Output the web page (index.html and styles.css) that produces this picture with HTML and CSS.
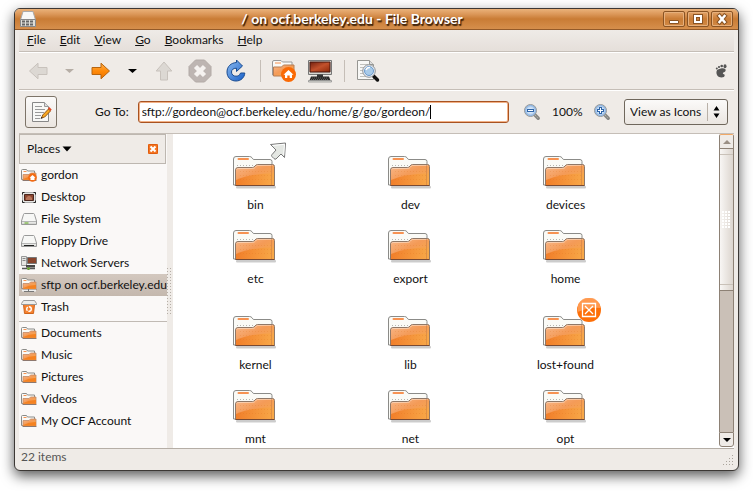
FILE: index.html
```html
<!DOCTYPE html>
<html lang="en">
<head>
<meta charset="utf-8">
<title>/ on ocf.berkeley.edu - File Browser</title>
<link rel="stylesheet" href="styles.css">
</head>
<body>
<svg class="sprite" aria-hidden="true">
  <defs>
    <linearGradient id="g-front" x1="0" y1="0" x2="1" y2="1"><stop offset="0" stop-color="#f8b98c"/><stop offset=".45" stop-color="#f49b58"/><stop offset="1" stop-color="#f9ad45"/></linearGradient>
    <linearGradient id="g-low" x1="0" y1="0" x2="1" y2="0"><stop offset="0" stop-color="#f17a22"/><stop offset="1" stop-color="#f8a848"/></linearGradient>
    <linearGradient id="g-orange" x1="0" y1="0" x2="0" y2="1"><stop offset="0" stop-color="#ffb050"/><stop offset=".5" stop-color="#ff8a08"/><stop offset="1" stop-color="#ee7200"/></linearGradient>
    <linearGradient id="g-blue" x1="0" y1="0" x2="1" y2="1"><stop offset="0" stop-color="#8dbbef"/><stop offset="1" stop-color="#175fc8"/></linearGradient>
    <linearGradient id="g-screen" x1="0" y1="0" x2="1" y2="1"><stop offset="0" stop-color="#72200f"/><stop offset=".5" stop-color="#c2512c"/><stop offset="1" stop-color="#8c2708"/></linearGradient>
    <radialGradient id="g-lens"><stop offset="0" stop-color="#f5faff"/><stop offset="1" stop-color="#9dc2ea"/></radialGradient>
  </defs>
  <symbol id="folder" viewBox="0 0 44 34">
    <rect x="3" y="31" width="40" height="2.500" rx="1" fill="#000" opacity=".2"/>
    <path d="M.5 30V4q0-2.500 2.500-2.500h13.500q1.500 0 2.500 1.200l1.400 1.800H37q2 0 2 2V30z" fill="#fafaf6" stroke="#8b8b88"/>
    <path d="M5.500 4h9.500" stroke="#f79252" stroke-width="2" stroke-linecap="round"/>
    <path d="M4 10.500h16" stroke="#b5b5b0" stroke-dasharray="1 2"/>
    <path d="M2.500 30.500V15q0-2.500 2.500-2.500h14.500q1.500 0 2.500-1.500t2.500-1.500h15q2 0 2 2v19z" fill="url(#g-front)" stroke="#8f7868"/>
    <path d="M3 25Q17 18.500 41 18.500V30H3z" fill="url(#g-low)" opacity=".85"/>
    <path d="M7 16.500h33M7 20.500h33M7 24.500h33" stroke="#db701c" stroke-dasharray="1 2" opacity=".22"/>
    <path d="M3.500 14.500q.5-1 2-1h14q2 0 3-1.500t2-1.500h15" fill="none" stroke="#fff" opacity=".4"/>
    <path d="M38.500 10v20" stroke="#b97041" opacity=".4"/>
    <path d="M2.500 30.500h39" stroke="#7a4a32"/>
  </symbol>
  <symbol id="mini" viewBox="0 0 16 14">
    <path d="M.5 11.500v-9q0-1 1-1h4l1 1.500h7v8z" fill="#fafaf7" stroke="#8b8b88"/>
    <path d="M2.500 3.500h3" stroke="#f79252"/>
    <path d="M2 12V6.500h6L9.500 5H15v7z" fill="url(#g-front)" stroke="#c28a68" stroke-width=".8"/>
    <path d="M2.400 11Q8 7.800 15 8v3.800H2.400z" fill="#f58221"/>
    <path d="M1.500 12.500h14" stroke="#77625a" stroke-width=".8"/>
  </symbol>
  <symbol id="drive" viewBox="0 0 16 14">
    <path d="M3.500 1.500h9q.8 0 1 1l2 6.500v3.500H.5V9l2-6.500q.2-1 1-1z" fill="#f7f7f6" stroke="#999"/>
    <path d="M1 9.500h14" stroke="#b5b5b5"/><path d="M1 10.500h14v1.500H1z" fill="#d8d8d6"/>
  </symbol>
  <symbol id="lens" viewBox="0 0 18 18">
    <path d="M12 12l3.200 3.200" stroke="#888884" stroke-width="3.500" stroke-linecap="round"/>
    <path d="M12 12l3.500 3.500" stroke="#cbcbc6" stroke-dasharray="1 1.500"/>
    <circle cx="7.500" cy="7.500" r="6" fill="url(#g-lens)" stroke="#999a98"/><circle cx="7.500" cy="7.500" r="4.900" fill="none" stroke="#8bb0de"/>
  </symbol>
  <symbol id="arrow" viewBox="0 0 24 24"><path d="M3 8.500h9V4.200l8.500 7.800-8.500 7.800v-4.300H3z" stroke-linejoin="round"/></symbol>
</svg>

<div class="window">
  <header class="titlebar">
    <svg class="title-icon" viewBox="0 0 16 16"><path d="M3 .5h10L15.500 9v6.500H.5V9z" fill="#f8f8f7" stroke="#aaa"/><path d="M.5 8.500h15v7H.5z" fill="#deded9" stroke="#888"/><path d="M2 10.500h12M2 13.500h12" stroke="#666" stroke-width="2" stroke-dasharray="3 1"/></svg>
    <h1>/ on ocf.berkeley.edu - File Browser</h1>
    <div class="controls">
      <button aria-label="Minimize"><svg viewBox="0 0 20 14"><path d="M5.500 8.500h9v3h-9z" fill="#fff" stroke="#8a5424"/></svg></button>
      <button aria-label="Maximize"><svg viewBox="0 0 20 14"><path d="M7 4h6v6H7z" fill="none" stroke="#8a5424" stroke-width="4"/><path d="M7 4h6v6H7z" fill="none" stroke="#fff" stroke-width="2"/></svg></button>
      <button aria-label="Close"><svg viewBox="0 0 20 14"><path d="M7.500 4l5 6M12.500 4l-5 6" stroke="#8a5424" stroke-width="4.500" stroke-linecap="square"/><path d="M7.500 4l5 6M12.500 4l-5 6" stroke="#fff" stroke-width="2.500" stroke-linecap="square"/></svg></button>
    </div>
  </header>

  <nav class="menubar">
    <button><u>F</u>ile</button><button><u>E</u>dit</button><button><u>V</u>iew</button><button><u>G</u>o</button><button><u>B</u>ookmarks</button><button><u>H</u>elp</button>
  </nav>

  <div class="toolbar">
    <button aria-label="Back"><svg viewBox="0 0 24 24" fill="#dcd8d3" stroke="#c8c2bc"><use href="#arrow" transform="translate(24 0) scale(-1 1)"/></svg></button>
    <button class="drop" aria-label="Back history"><svg viewBox="0 0 15 24"><path d="M3 10h9l-4.500 4z" fill="#b6aea6"/></svg></button>
    <button aria-label="Forward"><svg viewBox="0 0 24 24" fill="url(#g-orange)" stroke="#b7650f"><use href="#arrow"/></svg></button>
    <button class="drop" aria-label="Forward history"><svg viewBox="0 0 15 24"><path d="M3 10h9l-4.500 4z" fill="#000"/></svg></button>
    <button aria-label="Up"><svg viewBox="0 0 24 24"><path d="M8.500 21v-9H4.200L12 3l7.800 9h-4.300v9z" fill="#dcd8d3" stroke="#c8c2bc" stroke-linejoin="round"/></svg></button>
    <button aria-label="Stop"><svg viewBox="0 0 24 24"><path d="M7.500 1h9L23 7.500v9L16.500 23h-9L1 16.500v-9z" fill="#bdb5b2" stroke="#b2aaa6"/><path d="M7.500 7.500l9 9M16.500 7.500l-9 9" stroke="#f5f2f0" stroke-width="4.500"/></svg></button>
    <button aria-label="Reload"><svg viewBox="0 0 24 24"><path d="M12.500 3.500V1l6 6-6 5.500V9.200C9 9.200 7.500 11 7.500 13c0 2.600 2 4.200 4.500 4.200 2 0 3.700-1 4.600-3.200h4.200C20.500 18.500 17 22 12 22c-5.500 0-9-3.800-9-9 0-5.500 4-9.200 9.500-9.500z" fill="url(#g-blue)" stroke="#1a4c91"/></svg></button>
    <span class="rule"></span>
    <button aria-label="Home"><svg viewBox="0 0 24 24"><path d="M.5 16V3q0-1.500 1.500-1.500h7L10.500 3H20v13z" fill="#fafaf7" stroke="#999"/><path d="M3 4h6" stroke="#f79252"/><path d="M1.500 17V8h8L11.500 6H22v11z" fill="url(#g-front)" stroke="#b77e55"/><circle cx="16.500" cy="15.500" r="7.500" fill="#fa6a05"/><path d="M16.500 11l5 4.700H20V19h-2.300v-2.500h-2.400V19H13v-3.300h-1.500z" fill="#fff"/></svg></button>
    <button aria-label="Computer"><svg viewBox="0 0 24 24"><path d="M.5 1.500h23v14H.5z" fill="#d7d7d2" stroke="#777"/><path d="M2 3h20v10H2z" fill="url(#g-screen)" stroke="#46150c"/><path d="M9 15.500h6v3H9z" fill="#333"/><path d="M3 17.500h18l1.500 4h-21z" fill="#292929"/><path d="M4 19h16M3 20.500h18" stroke="#777" stroke-width=".7" stroke-dasharray="1 1"/><path d="M.5 21.500h23v1.500H.5z" fill="#deded8" stroke="#888" stroke-width=".7"/></svg></button>
    <span class="rule"></span>
    <button aria-label="Search"><svg viewBox="0 0 24 24"><path d="M1.500 1.500h12l4 4v15h-16z" fill="#f8f8f6" stroke="#969692"/><path d="M13.500 1.500v4h4" fill="#ddd" stroke="#969692"/><path d="M4 5.500h8M4 8.500h5M4 11.500h4M4 14.500h4M4 17.500h10" stroke="#c2c2be"/><path d="M17.500 17l4 4" stroke="#111" stroke-width="3.500" stroke-linecap="round"/><circle cx="13" cy="12" r="6.300" fill="#e9eef4" stroke="#8f9397"/><circle cx="13" cy="12" r="4.500" fill="#a9cbe9" stroke="#6b9acb"/><path d="M10 11q1-3 4-2.500" stroke="#fff" stroke-width="1.500" fill="none"/></svg></button>
    <svg class="foot" viewBox="0 0 12 14"><path d="M5.800 4.500c3-.8 5.500.3 4.800 2.300-.5 1.600-3 1.300-2.700 2.700.2 1 1.800.3 1.800 1.800 0 1.400-1.500 2.200-3.200 2.200C3 13.500 1 10.500 1.500 7.500c.3-1.700 2.300-2.600 4.300-3z" fill="#555"/><ellipse cx="10" cy="2.200" rx="1.500" ry="2" fill="#555"/><circle cx="6.700" cy="2" r="1.300" fill="#555"/><circle cx="4" cy="3" r="1.100" fill="#555"/><circle cx="1.800" cy="4.500" r="1" fill="#555"/></svg>
  </div>

  <div class="location">
    <button class="edit" aria-label="Edit location"><svg viewBox="0 0 22 22"><path d="M2.500 1.500h12l4 4v15h-16z" fill="#f8f8f6" stroke="#888"/><path d="M14.500 1.500v4h4" fill="#ddd" stroke="#999"/><path d="M5 5.500h7M5 8.500h10M5 11.500h9M5 14.500h6M5 17.500h5" stroke="#999"/><path d="M11.500 17l1.200-3L18.500 8l2 2-5.800 6z" fill="#f9a81f" stroke="#955817"/><path d="M18 7.500l2.500 2.500 1.200-1.400L19.200 6z" fill="#e34825"/><path d="M10.500 18l1-2 1.200 1z" fill="#111"/></svg></button>
    <label for="path">Go To:</label>
    <div class="entry"><input id="path" type="text" value="sftp://gordeon@ocf.berkeley.edu/home/g/go/gordeon/"><span class="caret"></span></div>
    <button class="zoom" aria-label="Zoom out"><svg viewBox="0 0 18 18"><use href="#lens"/><path d="M4 7.500h7" stroke="#2f65a8" stroke-width="3"/><path d="M5 7.500h5" stroke="#fff"/></svg></button>
    <span class="percent">100%</span>
    <button class="zoom" aria-label="Zoom in"><svg viewBox="0 0 18 18"><use href="#lens"/><path d="M4 7.500h7M7.500 4v7" stroke="#2f65a8" stroke-width="3"/><path d="M5 7.500h5M7.500 5v5" stroke="#fff"/></svg></button>
    <div class="combo"><select aria-label="View mode"><option>View as Icons</option><option>View as List</option></select><svg viewBox="0 0 20 24"><path d="M.5 3v18" stroke="#b9b1a8"/><path d="M6.500 10.500h6l-3-4.500zM6.500 13.500h6l-3 4.500z" fill="#000"/></svg></div>
  </div>

  <main class="panes">
    <aside class="sidebar">
      <div class="side-head">
        <button class="places">Places<svg viewBox="0 0 10 6"><path d="M.5.5h9L5 5.500z" fill="#000"/></svg></button>
        <button class="side-close" aria-label="Close side pane"><svg viewBox="0 0 10 10"><rect width="10" height="10" rx="1" fill="#f47421"/><rect x=".5" y=".5" width="9" height="9" rx="1" fill="none" stroke="#df5c0f"/><path d="M2.500 2.500l5 5M7.500 2.500l-5 5" stroke="#fff" stroke-width="2"/></svg></button>
      </div>
      <ul class="bookmarks">
        <li><a href="#"><svg viewBox="0 0 16 14"><use href="#mini"/><circle cx="11.500" cy="9.500" r="4.300" fill="#f26b14"/><path d="M11.500 7l3 2.800h-1V12h-4V9.800h-1z" fill="#fff"/></svg>gordon</a></li>
        <li><a href="#"><svg viewBox="0 0 16 14"><path d="M1.500 2.500h13v10h-13z" fill="#e6e6e4" stroke="#aaa"/><path d="M3.500 4.500h9v6h-9z" fill="#8c4630" stroke="#4b271e"/><path d="M5 8l2-2h2l2 2v2H5z" fill="#b8745a"/><path d="M1.500 4.500v-2h2M12.500 2.500h2v2M14.500 10.500v2h-2M3.500 12.500h-2v-2" fill="none" stroke="#222"/></svg>Desktop</a></li>
        <li><a href="#"><svg viewBox="0 0 16 14"><use href="#drive"/><path d="M3.500 11h4" stroke="#5aa817"/></svg>File System</a></li>
        <li><a href="#"><svg viewBox="0 0 16 14"><use href="#drive"/><path d="M3 11.500h10" stroke="#222"/></svg>Floppy Drive</a></li>
        <li><a href="#"><svg viewBox="0 0 16 14"><path d="M.5.500h5v9h-5z" fill="#e7e7e4" stroke="#999"/><path d="M1.500 2.500h3M1.500 4.500h3" stroke="#888"/><path d="M6.500 1.500h9v6h-9z" fill="#89442c" stroke="#777"/><path d="M5 9h9v2.500H5z" fill="#444"/><path d="M1 12.500h13M7.500 10v4" stroke="#555" stroke-width="1.500"/><path d="M6 12.500h3" stroke="#6eae34" stroke-width="2"/></svg>Network Servers</a></li>
        <li class="current"><a href="#"><svg viewBox="0 0 16 14"><use href="#mini" y="-1"/><path d="M1 12.500h14" stroke="#eee" stroke-width="2"/><path d="M3 13.500h10M7.500 11v3" stroke="#777"/></svg>sftp on ocf.berkeley.edu</a></li>
        <li><a href="#"><svg viewBox="0 0 16 14"><path d="M2.500 4.500h11l-1 9h-9z" fill="#f6812e" stroke="#ce641c"/><path d="M2.500.5h11l2 3v1H.5v-1z" fill="#ededeb" stroke="#999"/><circle cx="8" cy="9" r="2.300" fill="none" stroke="#fff" stroke-width="1.400" stroke-dasharray="3.800 1"/></svg>Trash</a></li>
        <li class="split"></li>
        <li><a href="#"><svg><use href="#mini"/></svg>Documents</a></li>
        <li><a href="#"><svg><use href="#mini"/></svg>Music</a></li>
        <li><a href="#"><svg><use href="#mini"/></svg>Pictures</a></li>
        <li><a href="#"><svg><use href="#mini"/></svg>Videos</a></li>
        <li><a href="#"><svg><use href="#mini"/></svg>My OCF Account</a></li>
      </ul>
    </aside>
    <div class="sash"><span></span></div>
    <section class="files" aria-label="Files">
      <a class="file" href="#"><span class="pic"><svg class="folder"><use href="#folder"/></svg><svg class="emblem link" viewBox="0 0 18 18"><path d="M1.500 2.500l15-1.500-1 14.500-3.500-3.500-5 5q-1 .6-2-.4l-2-2q-1-1 0-2l4-4.600z" fill="#e4e7e3" stroke="#777"/><path d="M3.500 3.500l12-1.200-.8 11" fill="none" stroke="#fff"/></svg></span>bin</a>
      <a class="file" href="#"><span class="pic"><svg class="folder"><use href="#folder"/></svg></span>dev</a>
      <a class="file" href="#"><span class="pic"><svg class="folder"><use href="#folder"/></svg></span>devices</a>
      <a class="file" href="#"><span class="pic"><svg class="folder"><use href="#folder"/></svg></span>etc</a>
      <a class="file" href="#"><span class="pic"><svg class="folder"><use href="#folder"/></svg></span>export</a>
      <a class="file" href="#"><span class="pic"><svg class="folder"><use href="#folder"/></svg></span>home</a>
      <a class="file tall" href="#"><span class="pic"><svg class="folder"><use href="#folder"/></svg></span>kernel</a>
      <a class="file tall" href="#"><span class="pic"><svg class="folder"><use href="#folder"/></svg></span>lib</a>
      <a class="file tall" href="#"><span class="pic"><svg class="folder"><use href="#folder"/></svg><svg class="emblem locked" viewBox="0 0 24 24"><circle cx="12" cy="12" r="12" fill="#fd6f08"/><path d="M.5 12a11.500 11.500 0 0 1 23-2Q13 8.500 .5 14z" fill="#ffa461" opacity=".8"/><path d="M5.500 5.500h13v13h-13zM8 8l8 8M16 8l-8 8" fill="none" stroke="#fff" stroke-width="1.300"/></svg></span>lost+found</a>
      <a class="file" href="#"><span class="pic"><svg class="folder"><use href="#folder"/></svg></span>mnt</a>
      <a class="file" href="#"><span class="pic"><svg class="folder"><use href="#folder"/></svg></span>net</a>
      <a class="file" href="#"><span class="pic"><svg class="folder"><use href="#folder"/></svg></span>opt</a>
    </section>
    <div class="scroll">
      <button class="up" aria-label="Scroll up"><svg viewBox="0 0 8 4"><path d="M0 4h8L4 0z" fill="#9b9085"/></svg></button>
      <div class="thumb"><span></span></div>
      <div class="trough"></div>
      <button class="down" aria-label="Scroll down"><svg viewBox="0 0 8 4"><path d="M0 0h8L4 4z" fill="#000"/></svg></button>
    </div>
  </main>
  <footer class="status"><span>22 items</span><svg viewBox="0 0 12 12"><path d="M10 1.500h2M7 4.500h5M4 7.500h8M1 10.500h11" stroke="#aaa49c" stroke-dasharray="1 2"/></svg></footer>
</div>
</body>
</html>
```
FILE: styles.css
```css
* { box-sizing: border-box; }

body {
  margin: 0;
  height: 100vh;
  padding: 8px 14px 20px;
  display: flex;
  background: #fff;
  color: #111;
  font: 12px/16px Lato, "Noto Sans", sans-serif;
}

button, input, select {
  margin: 0;
  padding: 0;
  border: 0;
  background: none;
  color: inherit;
  font: inherit;
}

a { color: inherit; text-decoration: none; }
svg { display: block; flex: none; }
.sprite { position: absolute; width: 0; height: 0; }

.window {
  flex: 1;
  min-width: 0;
  display: flex;
  flex-direction: column;
  border: 1px solid #3c3835;
  border-radius: 6px;
  background: #efebe7;
  box-shadow: 0 5px 13px rgba(0, 0, 0, .65);
  overflow: hidden;
}

.titlebar {
  display: flex;
  align-items: center;
  height: 21px;
  padding: 0 5px;
  border-bottom: 1px solid #935a29;
  background: linear-gradient(#eab27a, #dc985a 25%, #c97c35 50%, #d68f4c);
}
.title-icon { width: 16px; height: 16px; }
.titlebar h1 {
  flex: 1;
  margin: 0;
  padding-left: 5px;
  text-align: center;
  color: #fff;
  font-size: 14px;
  line-height: 16px;
  text-shadow: 1px 1px 1px #41240c, 1px 2px 1px #41240c;
}
.controls { display: flex; gap: 2px; }
.controls button {
  width: 22px;
  height: 16px;
  border: 1px solid #8a5424;
  border-radius: 2px;
  box-shadow: inset 0 0 0 1px #e6b07c;
}
.controls svg { width: 20px; height: 14px; }

.menubar {
  display: flex;
  gap: 14px;
  margin: 0 4px;
  padding: 2px 8px 3px;
  border-bottom: 1px solid #c5beb7;
  background: linear-gradient(#efebe7, #e5dfda);
}
.toolbar {
  display: flex;
  align-items: center;
  gap: 12px;
  height: 38px;
  margin: 0 4px;
  padding: 0 7px;
  border-top: 1px solid #fff;
  border-bottom: 1px solid #c5beb7;
}
.toolbar button, .toolbar button svg { width: 24px; height: 24px; }
.toolbar .drop, .toolbar .drop svg { width: 15px; }
.rule { width: 1px; height: 22px; margin-right: -1px; background: #c5beb7; }
.toolbar .foot { width: 12px; height: 14px; margin-left: auto; }

.location {
  display: flex;
  align-items: center;
  height: 44px;
  margin: 0 4px;
  padding: 0 6px 1px;
  border-top: 1px solid #fff;
  border-bottom: 1px solid #c5beb7;
}
.edit {
  display: grid;
  place-items: center;
  width: 32px;
  height: 32px;
  border: 1px solid #7d7468;
  border-radius: 3px;
  background: linear-gradient(#fbfaf9, #ebe6e1);
}
.edit svg { width: 22px; height: 22px; }
.location label { margin: 0 9px 0 38px; }
.entry {
  flex: 1;
  min-width: 0;
  display: flex;
  align-items: center;
  height: 22px;
  padding-left: 3px;
  border: 1px solid #a85221;
  border-radius: 3px;
  box-shadow: inset 0 0 0 1px #f2b186;
  background: #fff;
}
.entry input { field-sizing: content; min-width: 0; height: 18px; outline: 0; }
.caret { width: 1px; height: 14px; background: #000; }
.zoom { margin-left: 14px; }
.zoom svg { width: 18px; height: 18px; }
.percent { width: 30px; margin-left: 11px; white-space: nowrap; }
.percent + .zoom { margin-left: 11px; }
.combo {
  display: flex;
  align-items: center;
  width: 104px;
  height: 26px;
  margin-left: 13px;
  border: 1px solid #6f675c;
  border-radius: 3px;
  background: linear-gradient(#fbfaf9, #ebe6e1);
}
.combo select { flex: 1; min-width: 0; height: 24px; padding-left: 5px; appearance: none; }
.combo svg { width: 20px; height: 24px; }

.panes { flex: 1; display: flex; min-height: 0; margin: 0 4px; background: #fff; }
.sidebar { width: 148px; overflow: hidden; background: #faf8f7; }
.side-head {
  display: flex;
  justify-content: space-between;
  align-items: center;
  height: 30px;
  margin-right: 1px;
  padding: 0 7px;
  border: 1px solid #bdb7b0;
  background: #efebe7;
}
.places { display: flex; align-items: center; gap: 2px; }
.places svg { width: 10px; height: 6px; }
.side-close svg { width: 10px; height: 10px; }
.bookmarks { margin: 0; padding: 0; list-style: none; }
.bookmarks a {
  display: flex;
  align-items: center;
  gap: 4px;
  height: 22px;
  padding-left: 2px;
  white-space: nowrap;
}
.bookmarks svg { width: 16px; height: 14px; }
.current { background: linear-gradient(#d3c8bf, #c4b8ae); }
.split { height: 4px; border-bottom: 1px solid #c0bab4; }
.sash {
  display: grid;
  place-items: center;
  width: 6px;
  background: #efebe7;
}
.sash span {
  width: 6px;
  height: 46px;
  background: conic-gradient(from 270deg at 1px 1px, #b5aea6 90deg, transparent 0) 0 0 / 3px 3px;
}

.files {
  flex: 1;
  display: grid;
  grid-template-columns: repeat(3, 155px);
  align-content: start;
  padding: 19px 0 0 5px;
  overflow: hidden;
}
.file { display: flex; flex-direction: column; align-items: center; height: 74px; line-height: 16px; }
.file.tall { height: 86px; padding-top: 12px; }
.pic { position: relative; margin: 2px 2px 8px 0; }
.folder { width: 44px; height: 34px; }
.emblem { position: absolute; }
.link { width: 18px; height: 18px; right: -10px; top: -13px; }
.locked { width: 24px; height: 24px; right: -14px; top: -17px; }

.scroll { display: flex; flex-direction: column; width: 15px; margin-bottom: 1px; }
.scroll button {
  display: grid;
  place-items: center;
  height: 15px;
  border: 1px solid #8d8175;
  background: #efebe7;
}
.scroll button svg { width: 8px; height: 4px; }
.scroll .up { border-top: 1px solid #f0a866; border-radius: 2px 2px 0 0; }
.scroll .down { border-radius: 0 0 3px 3px; }
.thumb {
  flex: 1;
  display: grid;
  place-items: center;
  border: 1px solid #8d8175;
  border-top: 0;
  background: linear-gradient(#c9c1b8, #c9c1b8) 0 5px / 100% 1px no-repeat,
    linear-gradient(#c9c1b8, #c9c1b8) 0 calc(100% - 5px) / 100% 1px no-repeat,
    linear-gradient(90deg, #f8f6f4, #dcd5ce);
}
.thumb span {
  width: 9px;
  height: 18px;
  background: conic-gradient(from 270deg at 2px 2px, #fff 90deg, transparent 0) 0 0 / 3px 3px;
}
.trough { flex: 1; border: solid #8d8175; border-width: 0 1px; background: #cac0b7; }

.status {
  display: flex;
  justify-content: space-between;
  height: 22px;
  margin: 0 4px;
  padding-left: 2px;
  border-top: 1px solid #b5aea6;
  color: #555;
}
.status svg { width: 12px; height: 12px; margin-top: 5px; }
```
